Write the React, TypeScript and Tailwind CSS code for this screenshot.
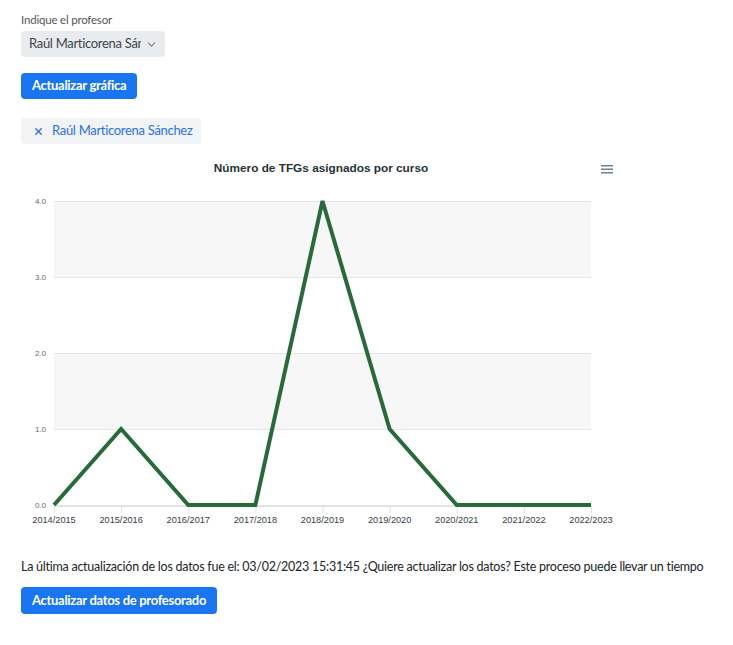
import { ChevronDown, X } from 'lucide-react';

const cursos = ['2014/2015', '2015/2016', '2016/2017', '2017/2018', '2018/2019', '2019/2020', '2020/2021', '2021/2022', '2022/2023'];
const valores = [0, 1, 0, 0, 4, 1, 0, 0, 0];

// plot area in svg coordinates
const X0 = 33;
const X1 = 570;
const Y0 = 355;
const UNIT = 76;

function Grafica() {
    const step = (X1 - X0) / (cursos.length - 1);
    const puntos = valores.map((v, i) => `${X0 + i * step},${Y0 - v * UNIT}`).join(' ');

    return (
        <svg width={620} height={386} className="block" style={{ fontFamily: 'Helvetica, Arial, sans-serif', letterSpacing: 0 }}>
            <text x={300} y={22} textAnchor="middle" fontSize={11.8} fontWeight={700} fill="#263238">
                Número de TFGs asignados por curso
            </text>
            {/* menu */}
            <g fill="#6e8192">
                <rect x={580} y={15} width={12} height={1.5} />
                <rect x={580} y={18.5} width={12} height={1.5} />
                <rect x={580} y={22} width={12} height={1.5} />
            </g>

            {/* bands */}
            <rect x={X0} y={Y0 - 4 * UNIT} width={X1 - X0} height={UNIT} fill="#f7f7f7" />
            <rect x={X0} y={Y0 - 2 * UNIT} width={X1 - X0} height={UNIT} fill="#f7f7f7" />
            {[0, 1, 2, 3, 4].map(v => (
                <g key={v}>
                    <line x1={X0} x2={X1} y1={Y0 - v * UNIT + 0.5} y2={Y0 - v * UNIT + 0.5} stroke="#e5e5e5" />
                    <text x={25} y={Y0 - v * UNIT + 3} textAnchor="end" fontSize={8} fill="#5c6b77">
                        {v.toFixed(1)}
                    </text>
                </g>
            ))}
            <line x1={X0} x2={X1} y1={Y0 + 1.5} y2={Y0 + 1.5} stroke="#e0e0e0" />
            {cursos.map((c, i) => (
                <g key={c}>
                    <line x1={X0 + i * step + 0.5} x2={X0 + i * step + 0.5} y1={Y0 + 2} y2={Y0 + 8} stroke="#e0e0e0" />
                    <text x={X0 + i * step} y={373} textAnchor="middle" fontSize={9.2} fill="#373d3f">
                        {c}
                    </text>
                </g>
            ))}

            <polyline points={puntos} fill="none" stroke="#276b3a" strokeWidth={4} strokeLinejoin="miter" />
        </svg>
    );
}

export default function App() {
    return (
        <div className="min-h-screen bg-white px-[21px] pt-[12px] tracking-[-0.3px] text-[#212529]" style={{ fontFamily: 'Lato, "Liberation Sans", sans-serif' }}>
            <div className="text-[11.5px] leading-[16px] tracking-[-0.2px] text-[#555]">Indique el profesor</div>

            <div className="mt-[3px] flex h-[26px] w-[144px] items-center rounded bg-[#e9ecef] pl-[8px] pr-[7px]">
                <span className="flex-1 overflow-hidden whitespace-nowrap text-[13px] text-[#3d434a]">Raúl Marticorena Sánchez</span>
                <ChevronDown className="ml-1 h-[13px] w-[13px] shrink-0 text-[#7a8189]" strokeWidth={2} />
            </div>

            <button className="mt-[16px] flex h-[26px] items-center rounded bg-[#1a75f0] px-[11px] text-[13px] font-bold text-white">
                Actualizar gráfica
            </button>

            <div className="mt-[19px] flex h-[26px] w-[180px] items-center gap-[8px] whitespace-nowrap rounded bg-[#f1f3f5] pl-[12px] text-[13px] text-[#2d6ff0]">
                <X className="h-[11px] w-[11px] shrink-0" strokeWidth={3} />
                <span>Raúl Marticorena Sánchez</span>
            </div>

            <div className="mt-[6px]">
                <Grafica />
            </div>

            <p className="mt-[22px] whitespace-nowrap text-[12.5px] leading-[18px] tracking-[-0.25px] text-[#212529]">
                La última actualización de los datos fue el: 03/02/2023 15:31:45 ¿Quiere actualizar los datos? Este proceso puede llevar un tiempo
            </p>

            <button className="mt-[11px] flex h-[27px] items-center rounded bg-[#1a75f0] px-[11px] text-[13px] font-bold text-white">
                Actualizar datos de profesorado
            </button>
        </div>
    );
}
